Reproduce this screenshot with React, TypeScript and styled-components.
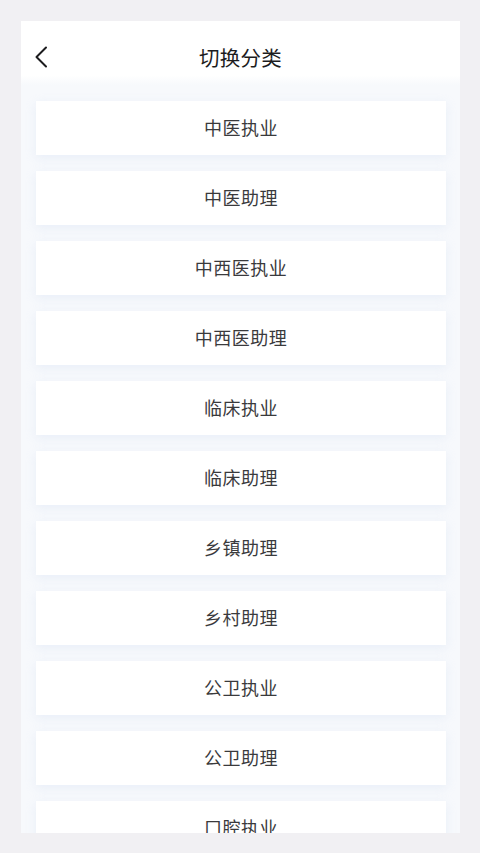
import React from "react";
import styled, { createGlobalStyle } from "styled-components";

const Global = createGlobalStyle`
  html, body { margin: 0; padding: 0; background: #f1f0f3; }
  body { font-family: "Noto Sans CJK SC", "Noto Sans", sans-serif; }
`;

const Page = styled.div`
  width: 480px;
  height: 853px;
  box-sizing: border-box;
  padding: 21px 20px 20px 21px;
  display: flex;
  overflow: hidden;
`;

const Panel = styled.div`
  flex: 1;
  display: flex;
  flex-direction: column;
  background: #f7f9fc;
  overflow: hidden;
`;

const Header = styled.header`
  height: 64px;
  box-sizing: border-box;
  padding-top: 7px;
  flex: none;
  display: grid;
  grid-template-columns: 48px 1fr 48px;
  align-items: center;
  background: linear-gradient(#ffffff 0%, #ffffff 85%, #f7f9fc 100%);
`;

const BackButton = styled.button`
  border: 0;
  background: none;
  padding: 0 0 0 13px;
  height: 40px;
  display: flex;
  align-items: center;
  cursor: pointer;
`;

const Title = styled.h1`
  margin: 0;
  text-align: center;
  font-size: 20.5px;
  font-weight: 400;
  color: #1c1c1e;
  letter-spacing: 0.3px;
`;

const List = styled.div`
  display: flex;
  flex-direction: column;
  gap: 16px;
  padding: 16px 14px 0 15px;
`;

const Card = styled.div`
  height: 54px;
  box-sizing: border-box;
  padding-bottom: 3px;
  flex: none;
  display: flex;
  align-items: center;
  justify-content: center;
  background: #ffffff;
  box-shadow: 0 3px 10px rgba(214, 226, 245, 0.45);
  font-size: 18px;
  color: #3a3a3c;
  letter-spacing: 0.5px;
`;

const items = [
  "中医执业",
  "中医助理",
  "中西医执业",
  "中西医助理",
  "临床执业",
  "临床助理",
  "乡镇助理",
  "乡村助理",
  "公卫执业",
  "公卫助理",
  "口腔执业",
];

export default function App() {
  return (
    <>
      <Global />
      <Page>
        <Panel>
          <Header>
            <BackButton aria-label="返回">
              <svg width="14" height="22" viewBox="0 0 14 22" fill="none">
                <path d="M12 1.5 L2.5 11 L12 20.5" stroke="#1c1c1e" strokeWidth="2" strokeLinecap="round" strokeLinejoin="round" />
              </svg>
            </BackButton>
            <Title>切换分类</Title>
            <span />
          </Header>
          <List>
            {items.map((t) => (
              <Card key={t}>{t}</Card>
            ))}
          </List>
        </Panel>
      </Page>
    </>
  );
}
